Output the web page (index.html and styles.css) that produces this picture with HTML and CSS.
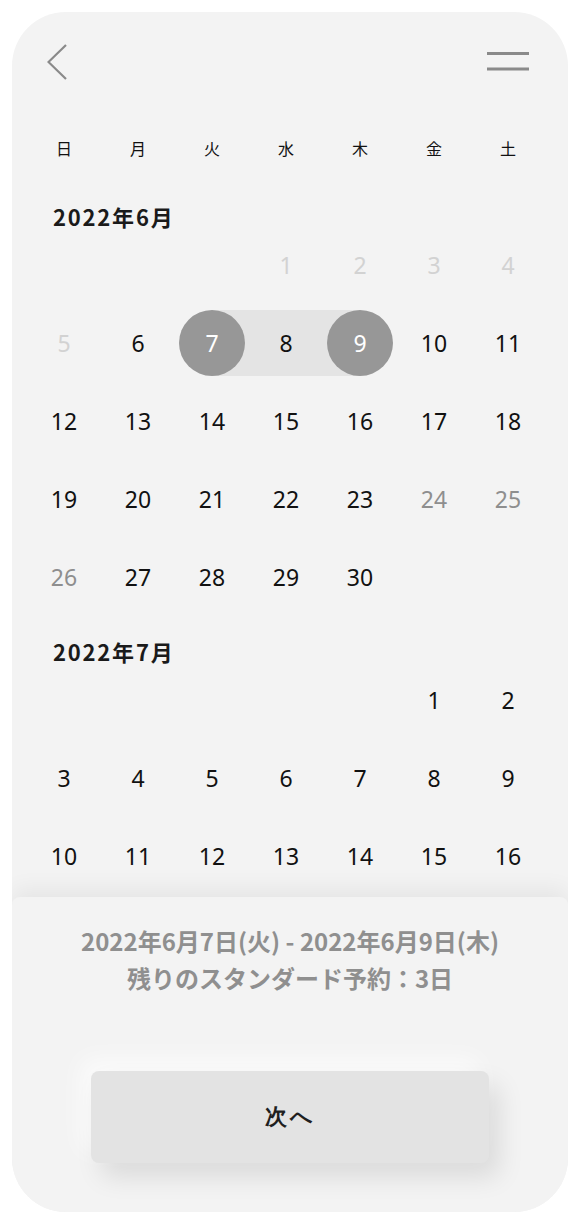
FILE: index.html
```html
<!DOCTYPE html>
<html lang="ja">
<head>
    <meta charset="UTF-8">
    <meta name="viewport" content="width=device-width, initial-scale=1.0">
    <title>予約カレンダー</title>
    <link rel="stylesheet" href="styles.css">
</head>
<body>
    <div class="phone">
        <header class="topbar">
            <svg class="icon-back" width="20" height="36" viewBox="0 0 20 36">
                <polyline points="19,1 1.5,18 19,35" fill="none" stroke="#8a8a8a" stroke-width="2.2"/>
            </svg>
            <svg class="icon-menu" width="42" height="34" viewBox="0 0 42 34">
                <line x1="0" y1="9.5" x2="42" y2="9.5" stroke="#8a8a8a" stroke-width="3"/>
                <line x1="0" y1="25" x2="42" y2="25" stroke="#8a8a8a" stroke-width="3"/>
            </svg>
        </header>

        <div class="calendar">
            <div class="weekdays grid">
                <span>日</span><span>月</span><span>火</span><span>水</span><span>木</span><span>金</span><span>土</span>
            </div>

            <div class="months">
                <section class="month">
                    <h2 class="month-title">2022年6月</h2>
                    <div class="days grid">
                        <span class="day"></span><span class="day"></span><span class="day"></span>
                        <span class="day past">1</span><span class="day past">2</span><span class="day past">3</span><span class="day past">4</span>
                        <span class="day past">5</span><span class="day">6</span>
                        <span class="day range-start"><b>7</b></span>
                        <span class="day range-mid">8</span>
                        <span class="day range-end"><b>9</b></span>
                        <span class="day">10</span><span class="day">11</span>
                        <span class="day">12</span><span class="day">13</span><span class="day">14</span><span class="day">15</span><span class="day">16</span><span class="day">17</span><span class="day">18</span>
                        <span class="day">19</span><span class="day">20</span><span class="day">21</span><span class="day">22</span><span class="day">23</span><span class="day off">24</span><span class="day off">25</span>
                        <span class="day off">26</span><span class="day">27</span><span class="day">28</span><span class="day">29</span><span class="day">30</span>
                    </div>
                </section>

                <section class="month">
                    <h2 class="month-title">2022年7月</h2>
                    <div class="days grid">
                        <span class="day"></span><span class="day"></span><span class="day"></span><span class="day"></span><span class="day"></span>
                        <span class="day">1</span><span class="day">2</span>
                        <span class="day">3</span><span class="day">4</span><span class="day">5</span><span class="day">6</span><span class="day">7</span><span class="day">8</span><span class="day">9</span>
                        <span class="day">10</span><span class="day">11</span><span class="day">12</span><span class="day">13</span><span class="day">14</span><span class="day">15</span><span class="day">16</span>
                    </div>
                </section>
            </div>
        </div>

        <footer class="panel">
            <p class="summary">2022年6月7日(火) - 2022年6月9日(木)<br>残りのスタンダード予約：3日</p>
            <button class="next-btn" type="button">次へ</button>
        </footer>
    </div>
</body>
</html>
```

FILE: styles.css
```css
body {
    margin: 0;
    background-color: #fff;
    font-family: "Noto Sans", "Noto Sans CJK JP", sans-serif;
    color: #111;
}

.phone {
    margin: 12px;
    width: 556px;
    height: 1200px;
    background-color: #f3f3f3;
    border-radius: 54px;
    overflow: hidden;
    display: flex;
    flex-direction: column;
}

.topbar {
    display: flex;
    justify-content: space-between;
    align-items: flex-start;
    padding: 32px 39px 0 35px;
    height: 34px;
}

.calendar {
    flex: 1;
    overflow: hidden;
    padding: 60px 22px 0 15px;
}

.grid {
    display: grid;
    grid-template-columns: repeat(7, 74px);
}

.weekdays span {
    text-align: center;
    font-family: "Noto Sans CJK JP", sans-serif;
    font-size: 16px;
    line-height: 20px;
    color: #111;
}

.months {
    display: flex;
    flex-direction: column;
    gap: 25px;
    margin-top: 48px;
}

.month-title {
    margin: 0 0 0 26px;
    font-family: "Noto Sans CJK JP", sans-serif;
    font-size: 22px;
    font-weight: 700;
    line-height: 20px;
    letter-spacing: 1.8px;
    color: #1a1a1a;
}

.day {
    height: 78px;
    display: flex;
    align-items: center;
    justify-content: center;
    font-size: 23px;
    color: #111;
}

.day.past {
    color: #d2d2d2;
}

.day.off {
    color: #8e8e8e;
}

.day b {
    width: 66px;
    height: 66px;
    border-radius: 50%;
    background-color: #979797;
    color: #fff;
    font-weight: 400;
    display: flex;
    align-items: center;
    justify-content: center;
}

.range-start,
.range-mid,
.range-end {
    background-repeat: no-repeat;
    background-position: center;
    background-size: 100% 66px;
}

.range-start {
    background-image: linear-gradient(to right, transparent 50%, #e4e4e4 50%);
}

.range-mid {
    background-image: linear-gradient(#e4e4e4, #e4e4e4);
}

.range-end {
    background-image: linear-gradient(to right, #e4e4e4 50%, transparent 50%);
}

.panel {
    height: 315px;
    flex-shrink: 0;
    background-color: #f3f3f3;
    border-radius: 8px 8px 0 0;
    box-shadow: 0 -8px 22px rgba(0, 0, 0, 0.06);
    display: flex;
    flex-direction: column;
    align-items: center;
    position: relative;
}

.summary {
    margin: 25px 0 0;
    text-align: center;
    font-family: "Noto Sans CJK JP", sans-serif;
    font-size: 24px;
    font-weight: 700;
    line-height: 37px;
    color: #8f8f8f;
}

.next-btn {
    margin-top: 75px;
    width: 398px;
    height: 92px;
    border: none;
    border-radius: 8px;
    background-color: #e3e3e3;
    box-shadow: 10px 14px 26px rgba(0, 0, 0, 0.1), -10px -12px 24px rgba(255, 255, 255, 0.7);
    font-family: "Liberation Serif", serif;
    font-size: 22px;
    font-weight: 700;
    letter-spacing: 3px;
    color: #1f1f1f;
    cursor: pointer;
}
```
